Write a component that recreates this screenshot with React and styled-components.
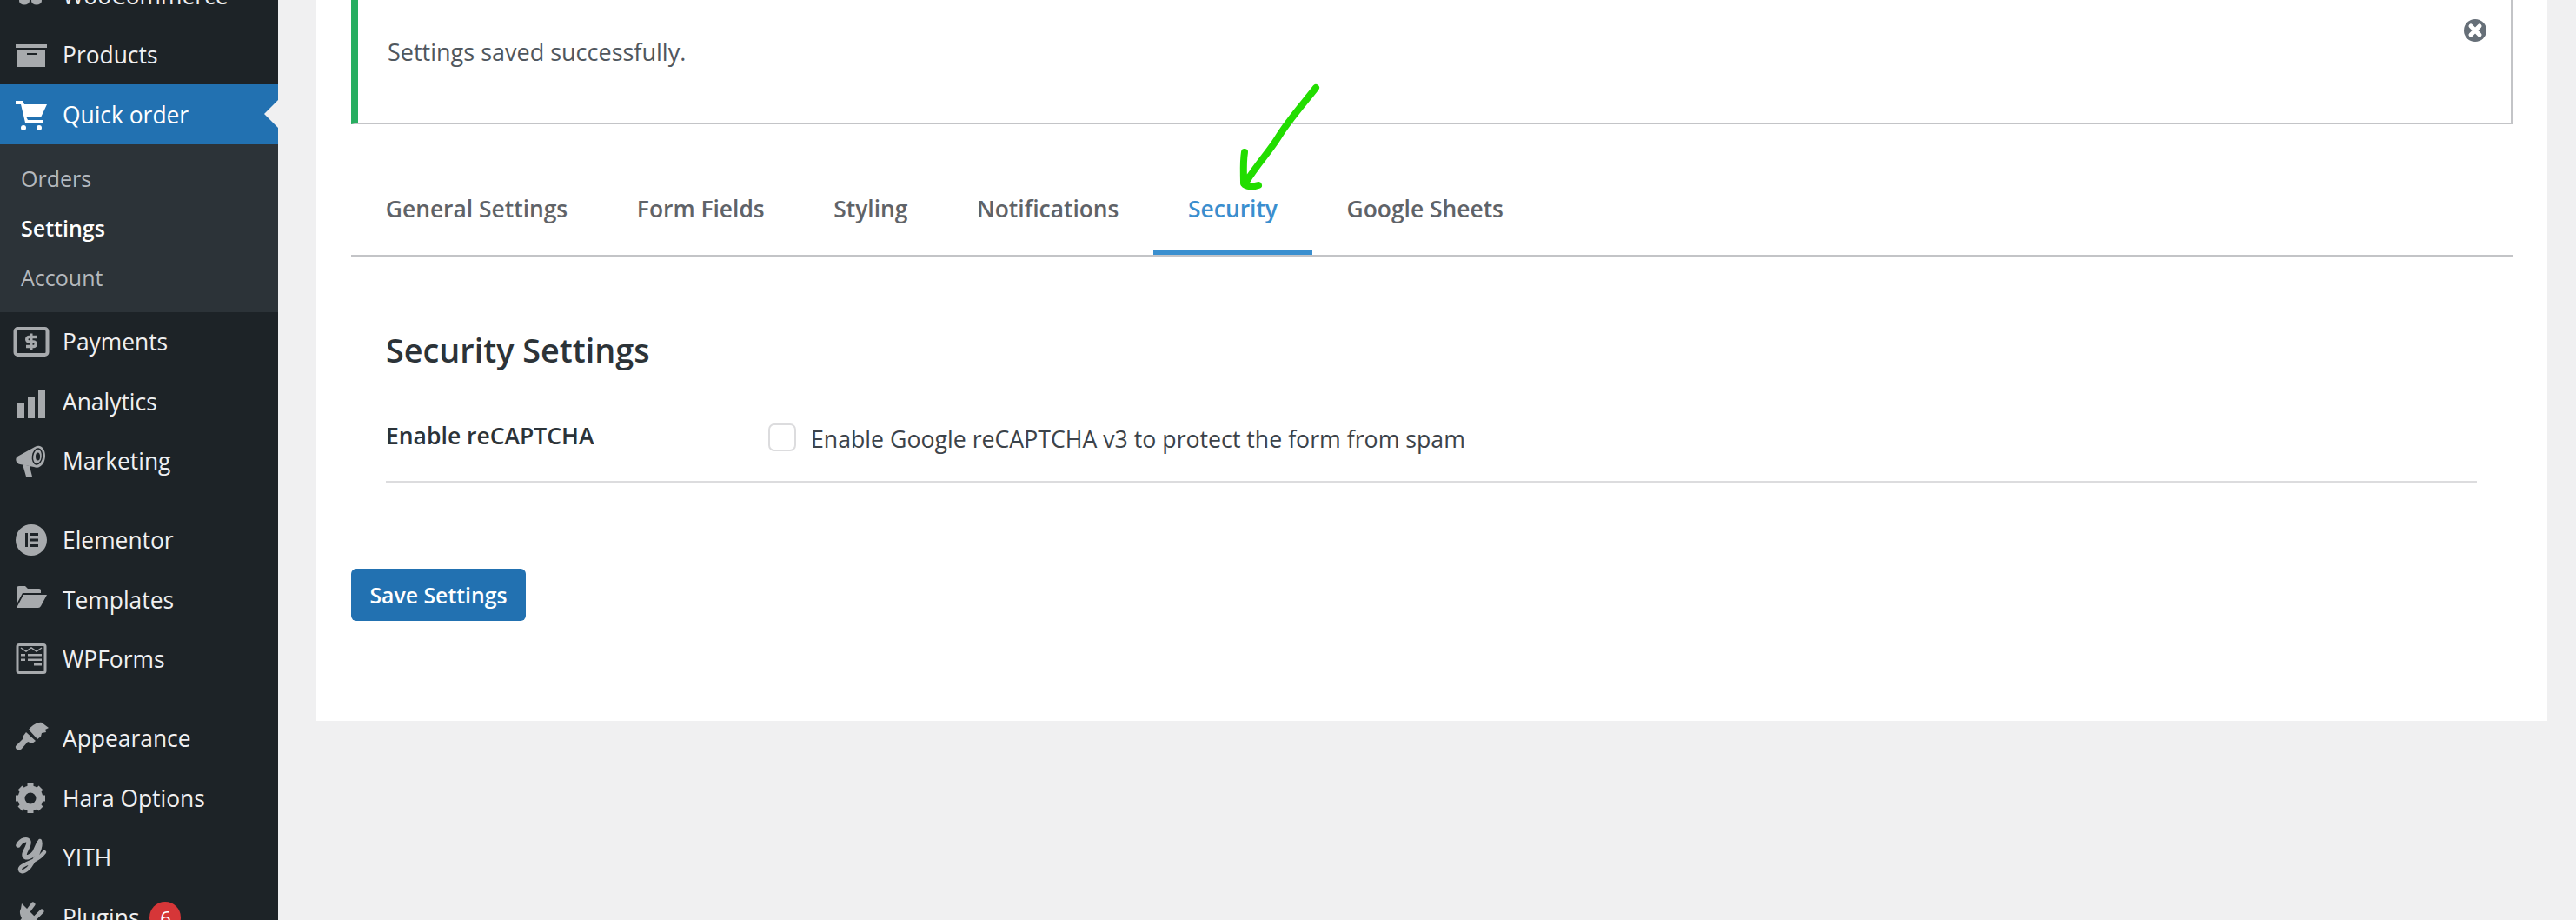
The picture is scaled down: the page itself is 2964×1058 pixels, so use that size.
import React from "react"
import styled, { createGlobalStyle } from "styled-components"

const GlobalStyle = createGlobalStyle`
    html, body {
        margin: 0;
        padding: 0;
        background: #f0f0f1;
        font-family: "Open Sans", "Noto Sans", sans-serif;
    }
`

const ICON = "#a7aaad"
const DARK = "#1d2327"

const Woo = () => (
    <>
        <ellipse cx="10" cy="26" rx="6" ry="4.5" />
        <ellipse cx="24" cy="26" rx="6" ry="4.5" />
    </>
)
const Archive = () => (
    <>
        <rect x="0" y="8" width="36" height="4" />
        <path fillRule="evenodd" d="M2 14h32v20H2zM13 18v2h11v-2z" />
    </>
)
const Cart = () => (
    <>
        <path d="M0 4h8l2 4h26l-7 15H12.500l1.500 3h17v3H11L6 8H0z" />
        <circle cx="9" cy="35" r="3" />
        <circle cx="27" cy="35" r="3" />
    </>
)
const Payment = () => (
    <>
        <rect x="-0.500" y="5" width="37" height="30" rx="3" fill="none" stroke={ICON} strokeWidth="4" />
        <path d="M24 14.500h-8.500a2.500 2.500 0 0 0 0 5.500h5a2.500 2.500 0 0 1 0 5.500H12" fill="none" stroke={ICON} strokeWidth="3.500" />
        <rect x="16.500" y="10.500" width="3" height="19" />
    </>
)
const Bars = () => (
    <>
        <rect x="2" y="22" width="8" height="17" />
        <rect x="14" y="15" width="8" height="24" />
        <rect x="26" y="7" width="8" height="32" />
    </>
)
const Megaphone = () => (
    <>
        <path d="M2 15 22 4C29 0 34 6 34 14 34 23 28 30 21 27L5 24C0 23-1 17 2 15Z" />
        <ellipse cx="25" cy="15" rx="5.500" ry="9" transform="rotate(8 25 15)" fill="none" stroke={DARK} strokeWidth="1.500" />
        <ellipse cx="25.500" cy="15" rx="2.500" ry="4.500" fill={DARK} />
        <path d="M8 24l8 2 3 12h-7z" />
    </>
)
const Elementor = () => (
    <>
        <circle cx="18" cy="20" r="18" />
        <path d="M11 12h3v16h-3zM17 12h9v3h-9zM17 18.500h9v3h-9zM17 25h9v3h-9z" fill={DARK} />
    </>
)
const Folder = () => (
    <>
        <path d="M1 7q0-3 3-3h7l3 3h13q2 0 2 2v3H8L1 25z" />
        <path d="M9 14h27l-7 13q-1 2-3 2H1z" />
    </>
)
const Forms = () => (
    <>
        <rect x="2" y="3.500" width="32" height="32" rx="2" fill="none" stroke={ICON} strokeWidth="3" />
        <path d="M6 7l6 4 6-4 6 4 6-4" fill="none" stroke={ICON} strokeWidth="1.500" />
        <path d="M6 14h5v2.500H6zM14 14h16v2.500H14zM6 19.500h5v2.500H6zM14 19.500h16v2.500H14zM21 25h9v2.500h-9z" />
    </>
)
const Brush = () => (
    <>
        <path d="M15 10C20 4 26 1 30 2l8 6-4 2 1 3-5 1-1 4-4 3z" />
        <path d="M12 13l11 10-4 3-5-2-7 8c-3 3-8 1-7-3l8-8 1-4z" />
    </>
)
const Gear = () => (
    <>
        <circle cx="17" cy="20" r="10.500" fill="none" stroke={ICON} strokeWidth="8" />
        {[0, 45, 90, 135, 180, 225, 270, 315].map((deg) => (
            <rect key={deg} x="13.500" y="3" width="7" height="6" transform={`rotate(${deg} 17 20)`} />
        ))}
    </>
)
const YithMark = () => (
    <g fill="none" stroke={ICON} strokeLinecap="round" strokeLinejoin="round">
        <path d="M3 6C6 0 15-3 15 3 15 8 10 13 10 17 10 22 18 20 22 14L27 3" strokeWidth="5.500" />
        <path d="M28 1C30 8 24 20 18 28 14 35 6 39 5 34 4 30 14 27 22 23 26 21 30 18 33 14" strokeWidth="4.500" />
    </g>
)
const Plug = () => (
    <>
        <path d="M8 11l18 18-4 3c-4 2-8 1-11-1l-4 5-3-3 4-5c-2-4-3-8-1-11z" transform="translate(-1 -7)" />
        <path d="M20 5l-6 8M30 13l-7 7" fill="none" stroke={ICON} strokeWidth="5" strokeLinecap="round" />
    </>
)

const menuGroups = [
    [
        { label: "WooCommerce", icon: Woo },
        { label: "Products", icon: Archive },
        {
            label: "Quick order",
            icon: Cart,
            active: true,
            children: [
                { label: "Orders" },
                { label: "Settings", current: true },
                { label: "Account" },
            ],
        },
        { label: "Payments", icon: Payment },
        { label: "Analytics", icon: Bars },
        { label: "Marketing", icon: Megaphone },
    ],
    [
        { label: "Elementor", icon: Elementor },
        { label: "Templates", icon: Folder },
        { label: "WPForms", icon: Forms },
    ],
    [
        { label: "Appearance", icon: Brush },
        { label: "Hara Options", icon: Gear },
        { label: "YITH", icon: YithMark },
        { label: "Plugins", icon: Plug, badge: 6 },
    ],
]

const tabs = ["General Settings", "Form Fields", "Styling", "Notifications", "Security", "Google Sheets"]

const App = () => {
    return (
        <Page>
            <GlobalStyle />
            <Sidebar>
                {menuGroups.map((group, i) => (
                    <MenuGroup key={i}>
                        {group.map((item) => (
                            <li key={item.label}>
                                <MenuItem $active={item.active}>
                                    <MenuIcon viewBox="0 0 36 40" $active={item.active}>
                                        <item.icon />
                                    </MenuIcon>
                                    <span>{item.label}</span>
                                    {item.badge && <Badge>{item.badge}</Badge>}
                                </MenuItem>
                                {item.children && (
                                    <SubMenu>
                                        {item.children.map((child) => (
                                            <SubItem key={child.label} $current={child.current}>{child.label}</SubItem>
                                        ))}
                                    </SubMenu>
                                )}
                            </li>
                        ))}
                    </MenuGroup>
                ))}
            </Sidebar>
            <Main>
                <Card>
                    <Notice>
                        <span>Settings saved successfully.</span>
                        <CloseIcon viewBox="0 0 26 26">
                            <circle cx="13" cy="13" r="13" fill="#666f78" />
                            <path d="M8 8l10 10M18 8L8 18" stroke="#fff" strokeWidth="5" strokeLinecap="round" />
                        </CloseIcon>
                    </Notice>
                    <TabBar>
                        {tabs.map((tab) => (
                            <Tab key={tab} $active={tab === "Security"}>{tab}</Tab>
                        ))}
                        <Arrow viewBox="0 0 100 124">
                            <path
                                d="M94 4C80 22 62 42 50 62 40 78 28 90 14 112M12 78C10 90 11 102 11 114 14 118 22 118 28 116"
                                fill="none"
                                stroke="#22dd00"
                                strokeWidth="8"
                                strokeLinecap="round"
                                strokeLinejoin="round"
                            />
                        </Arrow>
                    </TabBar>
                    <Section>
                        <Heading>Security Settings</Heading>
                        <FieldRow>
                            <FieldLabel>Enable reCAPTCHA</FieldLabel>
                            <CheckLabel>
                                <CheckBox />
                                Enable Google reCAPTCHA v3 to protect the form from spam
                            </CheckLabel>
                        </FieldRow>
                    </Section>
                    <SaveButton>Save Settings</SaveButton>
                </Card>
            </Main>
        </Page>
    )
}

export default App

const Page = styled.div`
    display: flex;
    height: 100vh;
    overflow: hidden;
    background: #f0f0f1;
`

const Sidebar = styled.nav`
    width: 320px;
    flex-shrink: 0;
    height: 1100px;
    margin-top: -39.75px;
    background: ${DARK};
`

const MenuGroup = styled.ul`
    list-style: none;
    margin: 0 0 22.5px;
    padding: 0;
`

const MenuItem = styled.div`
    position: relative;
    display: flex;
    align-items: center;
    height: 68.5px;
    padding-left: 18px;
    font-size: 26.4px;
    color: ${(p) => (p.$active ? "#fff" : "#f0f0f1")};
    background: ${(p) => (p.$active ? "#2271b1" : "transparent")};

    ${(p) => p.$active && `
        &::after {
            content: "";
            position: absolute;
            right: 0;
            top: 18px;
            border: 16px solid transparent;
            border-right-color: #f0f0f1;
            border-left-width: 0;
        }
    `}
`

const MenuIcon = styled.svg`
    width: 36px;
    height: 40px;
    margin-right: 18px;
    overflow: visible;
    flex-shrink: 0;
    fill: ${(p) => (p.$active ? "#fff" : ICON)};
`

const Badge = styled.span`
    display: flex;
    align-items: center;
    justify-content: center;
    width: 36px;
    height: 36px;
    margin-left: 12px;
    border-radius: 50%;
    background: #d63638;
    color: #fff;
    font-size: 22px;
`

const SubMenu = styled.ul`
    list-style: none;
    margin: 0;
    padding: 11.5px 0 10.5px;
    background: #2c3338;
`

const SubItem = styled.li`
    height: 57px;
    line-height: 57px;
    padding-left: 24px;
    font-size: 25px;
    font-weight: ${(p) => (p.$current ? 600 : 400)};
    color: ${(p) => (p.$current ? "#fff" : "#b4b9be")};
`

const Main = styled.main`
    flex: 1;
    min-width: 0;
    padding: 0 33px 0 44px;
`

const Card = styled.div`
    height: 869px;
    margin-top: -40px;
    padding: 0 40px;
    box-sizing: border-box;
    background: #fff;
`

const Notice = styled.div`
    position: relative;
    padding: 80px 0 61px 34px;
    line-height: 40px;
    font-size: 27px;
    font-weight: 500;
    color: #50575e;
    background: #fff;
    border: 2px solid #c3c4c7;
    border-left: 8px solid #27ae60;
    border-top: 0;
`

const CloseIcon = styled.svg`
    position: absolute;
    right: 28px;
    top: 62px;
    width: 26px;
    height: 26px;
`

const TabBar = styled.div`
    position: relative;
    display: flex;
    margin-top: 55px;
    border-bottom: 2px solid #c3c4c7;
`

const Tab = styled.div`
    padding: 22px 39.8px 27px;
    line-height: 40px;
    font-size: 26.4px;
    font-weight: 600;
    color: ${(p) => (p.$active ? "#3a8fcf" : "#5f6368")};
    border-bottom: 6px solid ${(p) => (p.$active ? "#3a8fcf" : "transparent")};
`

const Arrow = styled.svg`
    position: absolute;
    left: 1016px;
    top: -101px;
    width: 100px;
    height: 124px;
    overflow: visible;
`

const Section = styled.section`
    padding: 0 41px 0 40px;
`

const Heading = styled.h2`
    margin: 82px 0 0;
    line-height: 52px;
    font-size: 37.8px;
    font-weight: 600;
    color: #2c3338;
`

const FieldRow = styled.div`
    display: flex;
    align-items: flex-start;
    margin-top: 52px;
    height: 72px;
    border-bottom: 2px solid #dcdcde;
`

const FieldLabel = styled.div`
    width: 440px;
    line-height: 40px;
    font-size: 26.5px;
    font-weight: 600;
    color: #2c3338;
`

const CheckLabel = styled.label`
    display: flex;
    align-items: center;
    gap: 17px;
    margin-top: 4px;
    line-height: 40px;
    font-size: 26.7px;
    color: #3c434a;
`

const CheckBox = styled.span`
    display: block;
    width: 32px;
    height: 32px;
    box-sizing: border-box;
    margin-top: -5px;
    border: 2px solid #dcdcde;
    border-radius: 7px;
    background: #fff;
`

const SaveButton = styled.button`
    display: block;
    width: 201px;
    height: 60px;
    margin-top: 99px;
    padding: 0;
    border: 0;
    border-radius: 6px;
    background: #2271b1;
    color: #fff;
    font-family: inherit;
    font-size: 24.8px;
    font-weight: 600;
`
